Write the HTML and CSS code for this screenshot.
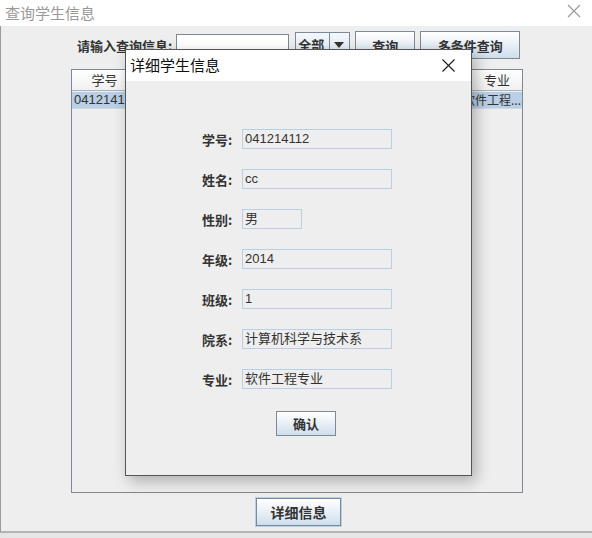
FILE: index.html
```html
<!DOCTYPE html>
<html lang="zh">
<head>
    <meta charset="UTF-8">
    <title>查询学生信息</title>
    <link rel="stylesheet" href="styles.css">
</head>
<body>
    <div class="frame">
        <div class="frame-title">
            <span class="frame-name">查询学生信息</span>
            <svg class="frame-close" width="14" height="14" viewBox="0 0 14 14">
                <path d="M1 1L13 13M13 1L1 13" stroke="#999" stroke-width="1.1" fill="none"/>
            </svg>
        </div>
        <div class="frame-body">
            <div class="search-row">
                <span class="search-label">请输入查询信息:</span>
                <div class="text-input"></div>
                <div class="combo">
                    <span class="combo-value">全部</span>
                    <span class="combo-arrow"></span>
                </div>
                <button class="btn btn-query">查询</button>
                <button class="btn btn-multi">多条件查询</button>
            </div>
            <div class="table">
                <div class="table-head">
                    <div class="th th-id">学号</div>
                    <div class="th th-fill"></div>
                    <div class="th th-major">专业</div>
                </div>
                <div class="table-row selected">
                    <div class="td td-id">0412141...</div>
                    <div class="td td-fill"></div>
                    <div class="td td-major"><span>软件工程...</span></div>
                </div>
            </div>
            <div class="bottom-row">
                <button class="btn btn-detail">详细信息</button>
            </div>
        </div>
        <div class="frame-foot"></div>
    </div>

    <!-- modal dialog with the selected record -->
    <div class="dialog">
        <div class="dialog-title">
            <span>详细学生信息</span>
            <svg class="dialog-close" width="13" height="13" viewBox="0 0 13 13">
                <path d="M0.5 0.5L12.5 12.5M12.5 0.5L0.5 12.5" stroke="#1a1a1a" stroke-width="1.1" fill="none"/>
            </svg>
        </div>
        <div class="dialog-body">
            <div class="field"><span class="field-label">学号:</span><span class="field-value">041214112</span></div>
            <div class="field"><span class="field-label">姓名:</span><span class="field-value">cc</span></div>
            <div class="field"><span class="field-label">性别:</span><span class="field-value short">男</span></div>
            <div class="field"><span class="field-label">年级:</span><span class="field-value">2014</span></div>
            <div class="field"><span class="field-label">班级:</span><span class="field-value">1</span></div>
            <div class="field"><span class="field-label">院系:</span><span class="field-value">计算机科学与技术系</span></div>
            <div class="field"><span class="field-label">专业:</span><span class="field-value">软件工程专业</span></div>
            <button class="btn btn-ok">确认</button>
        </div>
    </div>
</body>
</html>
```

FILE: styles.css
```css
* {
    margin: 0;
    padding: 0;
    box-sizing: border-box;
}
html, body {
    width: 592px;
    height: 538px;
    overflow: hidden;
    background: #eeeeee;
    font-family: "Liberation Sans", "Noto Sans CJK SC", sans-serif;
    font-size: 13px;
    color: #333;
}
.frame {
    display: flex;
    flex-direction: column;
    height: 538px;
}
.frame-title {
    height: 26px;
    flex-shrink: 0;
    background: #fff;
    display: flex;
    align-items: center;
    justify-content: space-between;
    padding: 0 11px 2px 5px;
}
.frame-name {
    font-family: "Noto Sans CJK SC", sans-serif;
    font-size: 15px;
    color: #999;
}
.frame-close {
    margin-top: -3px;
}
.frame-body {
    height: 507px;
    flex-shrink: 0;
    border-left: 1px solid #9a9a9a;
    border-bottom: 2px solid #b4b4b4;
    display: flex;
    flex-direction: column;
}
.frame-foot {
    flex: 1;
    background: #e6e6e6;
}
.search-row {
    display: flex;
    align-items: center;
    height: 28px;
    margin-top: 5px;
    padding-left: 76px;
}
.search-label {
    font-family: "Noto Sans CJK SC", sans-serif;
    font-weight: bold;
    font-size: 13px;
    margin-right: 4px;
}
.text-input {
    width: 113px;
    height: 22px;
    background: #fff;
    border: 1px solid #7a8a99;
}
.combo {
    display: flex;
    height: 27px;
    margin-left: 6px;
    border: 1px solid #7a8a99;
    background: linear-gradient(#f4f8fc, #dbe6f1);
}
.combo-value {
    width: 34px;
    font-family: "Noto Sans CJK SC", sans-serif;
    font-weight: bold;
    font-size: 13px;
    line-height: 24px;
    padding-left: 2px;
    border-right: 1px solid #7a8a99;
}
.combo-arrow {
    width: 19px;
    position: relative;
}
.combo-arrow::after {
    content: '';
    position: absolute;
    left: 4px;
    top: 9px;
    border-left: 5px solid transparent;
    border-right: 5px solid transparent;
    border-top: 6px solid #333;
}
.btn {
    font-family: "Noto Sans CJK SC", sans-serif;
    font-weight: bold;
    font-size: 13px;
    color: #333;
    border: 1px solid #7a8a99;
    background: linear-gradient(#ffffff, #f2f6fa 30%, #cfdeec);
}
.btn-query {
    width: 60px;
    height: 28px;
    margin-left: 5px;
}
.btn-multi {
    width: 100px;
    height: 28px;
    margin-left: 5px;
}
.table {
    margin: 10px 0 0 70px;
    width: 452px;
    height: 424px;
    border: 1px solid #7a8a99;
    background: #eeeeee;
}
.table-head, .table-row {
    display: flex;
}
.th {
    height: 21px;
    line-height: 19px;
    text-align: center;
    font-family: "Noto Sans CJK SC", sans-serif;
    font-size: 13px;
    background: linear-gradient(#ffffff, #f0f0f0);
    border-bottom: 1px solid #a8b4c0;
    border-right: 1px solid #c8c8c8;
}
.th-id, .td-id { width: 66px; }
.th-fill, .td-fill { flex: 1; }
.th-major, .td-major { width: 50px; border-right: none; }
.table-row.selected {
    background: #b8cfe5;
    height: 17px;
    margin-top: 1px;
    border-bottom: 1px solid #d0d8e0;
}
.td {
    font-size: 13px;
    line-height: 16px;
    white-space: nowrap;
    overflow: hidden;
    padding-left: 2px;
}
/* long major name runs left, under the dialog */
.td-major {
    display: flex;
    justify-content: flex-end;
    overflow: visible;
    padding: 0 1px 0 0;
    font-family: "Noto Sans CJK SC", sans-serif;
    font-size: 12px;
}
.td-major span {
    flex-shrink: 0;
}
.bottom-row {
    display: flex;
    justify-content: center;
    margin-top: 5px;
    padding-left: 4px;
}
.btn-detail {
    width: 85px;
    height: 28px;
    font-size: 14px;
    border: 1px solid #7a8a99;
    outline: 1px solid #b8cfe5;
}

/* dialog sits on top of the frame */
.dialog {
    position: absolute;
    left: 125px;
    top: 49px;
    width: 347px;
    height: 427px;
    border: 1px solid #555;
    background: #eeeeee;
    box-shadow: 4px 5px 14px rgba(0, 0, 0, 0.28);
    display: flex;
    flex-direction: column;
}
.dialog-title {
    height: 31px;
    background: #fff;
    display: flex;
    align-items: center;
    justify-content: space-between;
    padding: 0 16px 2px 4px;
    font-family: "Noto Sans CJK SC", sans-serif;
    font-size: 15px;
    color: #111;
}
.dialog-close {
    margin-top: 1px;
}
.dialog-body {
    display: flex;
    flex-direction: column;
    padding: 48px 0 0 76px;
    gap: 20px;
}
.field {
    display: flex;
    align-items: center;
    height: 20px;
}
.field-label {
    width: 40px;
    font-family: "Noto Sans CJK SC", sans-serif;
    font-weight: bold;
    font-size: 13px;
    color: #333;
}
.field-value {
    width: 150px;
    height: 20px;
    line-height: 18px;
    padding-left: 2px;
    border: 1px solid #b8cfe5;
    font-size: 13px;
    color: #333;
    white-space: nowrap;
}
.field-value.short {
    width: 60px;
}
.btn-ok {
    width: 60px;
    height: 25px;
    margin: 2px 0 0 74px;
}
```
